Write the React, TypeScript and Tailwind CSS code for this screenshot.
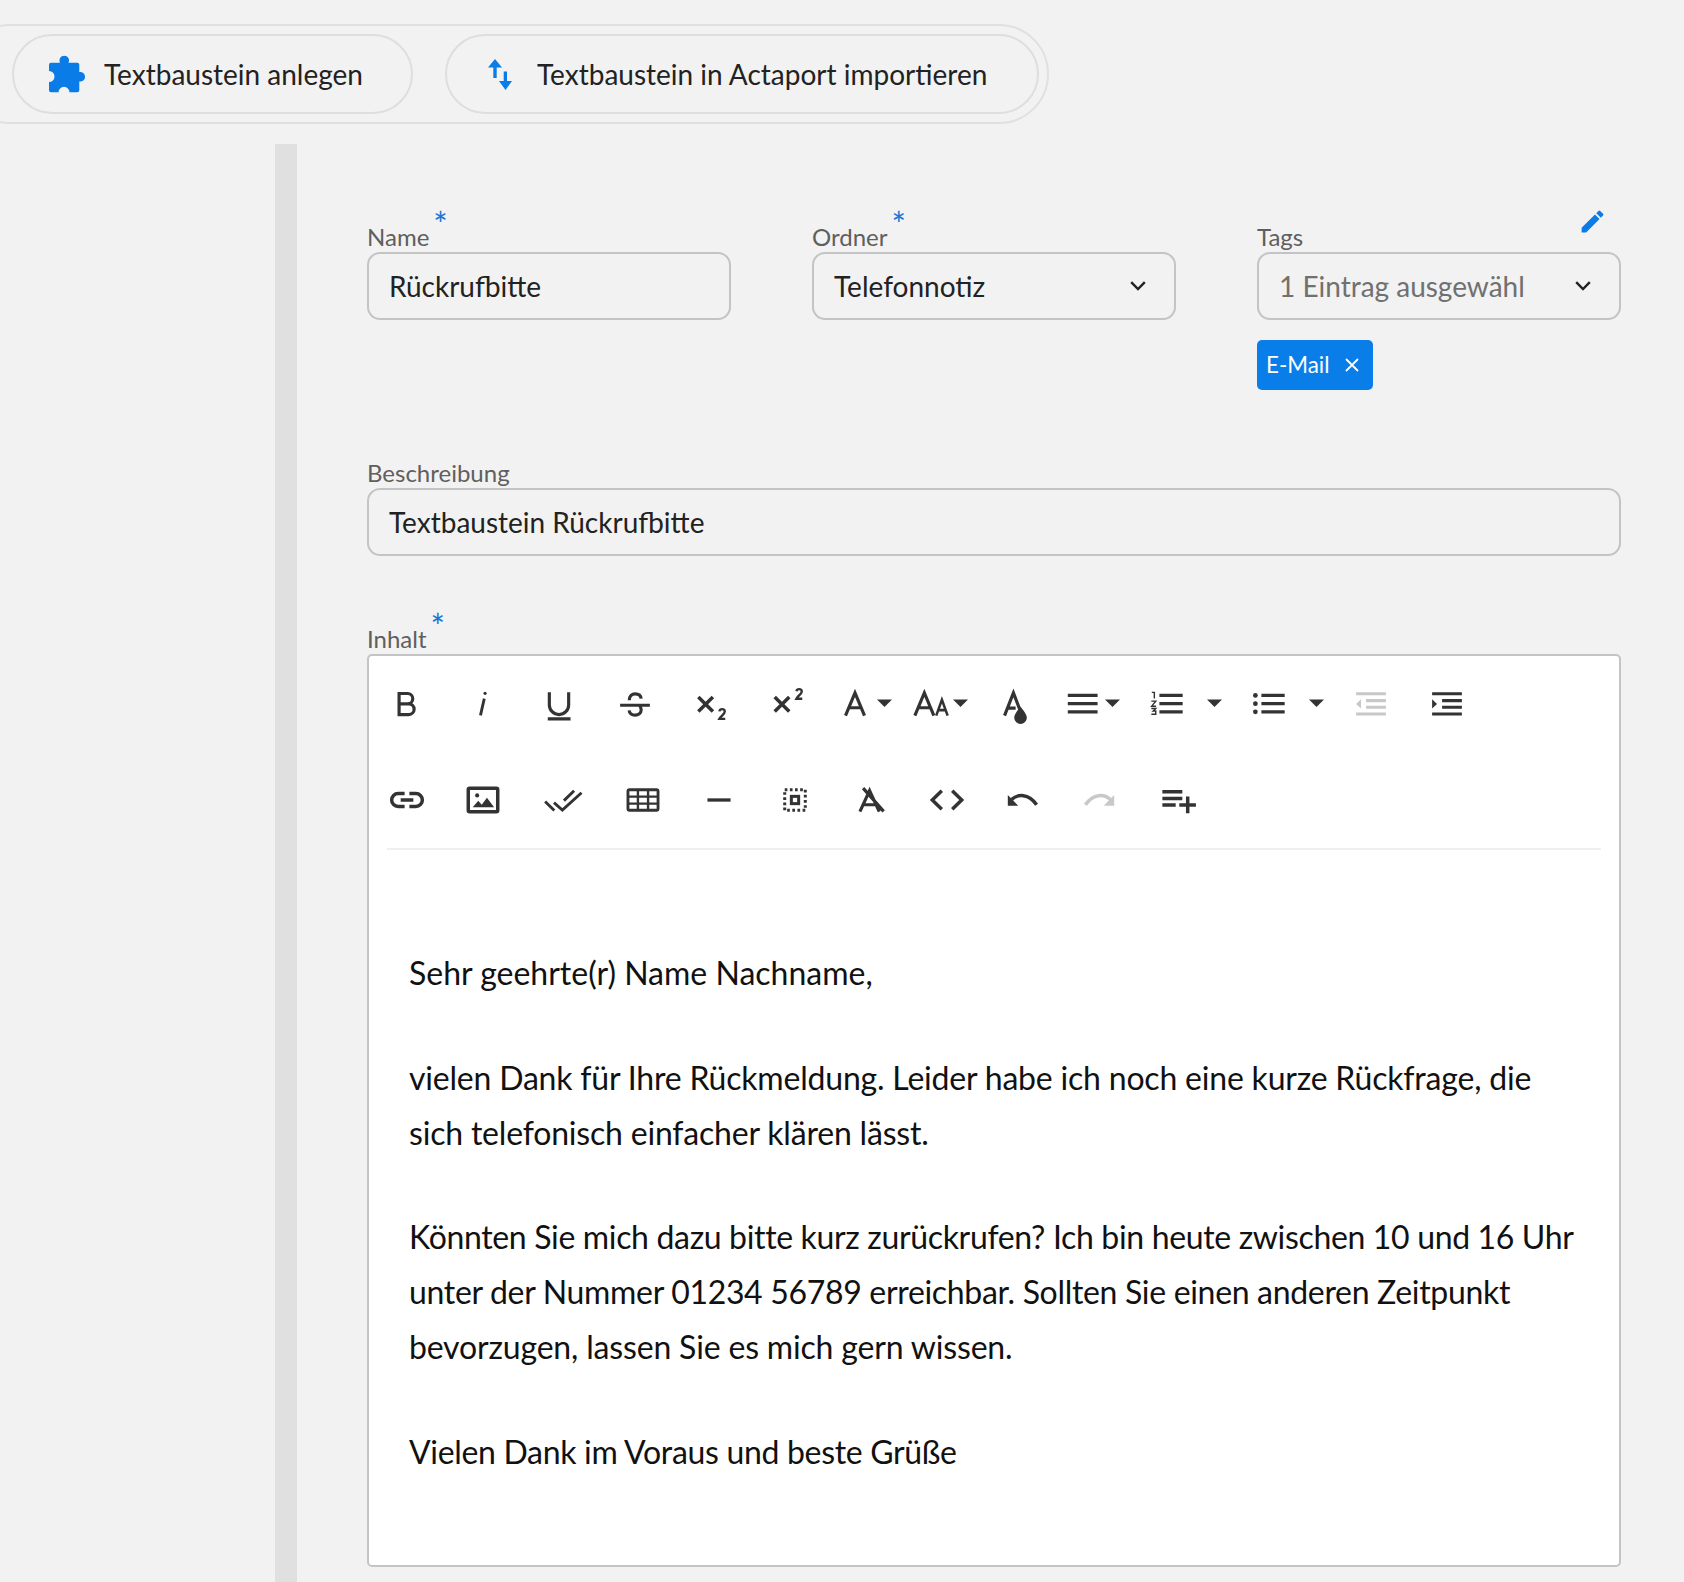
import type { ReactNode } from "react";
import { MdEdit } from "react-icons/md";

const DARK = "#333333";
const OFF = "#c8c8c8";

function Icon({ children, color = DARK }: { children: ReactNode; color?: string }) {
  return (
    <svg
      viewBox="0 0 24 24"
      className="h-[38px] w-[38px] shrink-0 overflow-visible"
      fill="none"
      stroke={color}
      strokeWidth="2"
    >
      {children}
    </svg>
  );
}

function Caret({ className = "" }: { className?: string }) {
  return (
    <svg viewBox="0 0 15 8" className={`h-2 w-[15px] shrink-0 ${className}`}>
      <path d="M0 0.5h15L7.5 8z" fill={DARK} />
    </svg>
  );
}

function Btn({ children, wide, className = "" }: { children: ReactNode; wide?: boolean; className?: string }) {
  return (
    <div className={`flex h-[76px] shrink-0 items-center justify-center ${wide ? "w-[84px]" : "w-[76.1px]"} ${className}`}>
      {children}
    </div>
  );
}

function Chevron() {
  return (
    <svg viewBox="0 0 16 10" className="h-2.5 w-4 shrink-0" fill="none" stroke="#222" strokeWidth="2.4">
      <path d="M1.200 1.200L8 8l6.800-6.800" />
    </svg>
  );
}

function Label({ text, star }: { text: string; star?: boolean }) {
  return (
    <div className="relative flex h-[30px] items-center text-[24px] leading-none text-[#5f5f5f]">
      {text}
      {star && <span className="relative -top-[13px] ml-[4px] text-[34px] leading-none text-[#1976d2]">*</span>}
    </div>
  );
}

const fieldClass =
  "flex h-[68px] items-center rounded-[13px] border-2 border-[#c4c4c4] px-[20px] text-[28px] text-[#222]";

export default function App() {
  return (
    <div className="h-[1582px] w-[1684px] overflow-hidden bg-[#f2f2f2] font-['Lato',sans-serif]">
      {/* Top button group */}
      <div className="pt-[24px]">
        <div className="ml-[-40px] flex h-[100px] w-[1089px] items-center gap-[32px] rounded-[50px] border-2 border-[#e0e0e0] pl-[50px]">
          <div className="flex h-[80px] w-[401px] items-center rounded-[40px] border-2 border-[#dedede] pl-[35px] text-[28px] text-[#222]">
            <svg viewBox="0 0 38 38" className="h-[38px] w-[38px]" fill="#0a7ce8">
              <path d="M2 7.700H11A4.800 4.800 0 1 1 19.500 7.700H28.300a2 2 0 0 1 2 2V17A4.800 4.800 0 1 1 30.300 26.400V35.300a2 2 0 0 1-2 2H20.500A5.500 5.500 0 0 0 9.500 37.300H2a2 2 0 0 1-2-2V27A5.500 5.500 0 0 0 0 16V9.700a2 2 0 0 1 2-2z" />
            </svg>
            <span className="ml-[17px]">Textbaustein anlegen</span>
          </div>
          <div className="flex h-[80px] w-[594px] items-center rounded-[40px] border-2 border-[#dedede] pl-[41px] text-[28px] text-[#222]">
            <svg viewBox="0 0 24 31" className="h-[31px] w-6" fill="#0a7ce8">
              <path d="M7 0l7 8.500H8.700V19H5.300V8.500H0z" />
              <path d="M17.500 31L11 22h4.700V12.500h3.300V22H24z" />
            </svg>
            <span className="ml-[25px]">Textbaustein in Actaport importieren</span>
          </div>
        </div>
      </div>

      <div className="mt-[20px] flex h-[1438px]">
        <div className="ml-[275px] w-[22px] shrink-0 bg-[#e0e0e0]" />
        <div className="ml-[70px] w-[1254px] pt-[78px]">
          {/* First row of fields */}
          <div className="grid grid-cols-3 gap-x-[81px]">
            <div>
              <Label text="Name" star />
              <div className={fieldClass}>Rückrufbitte</div>
            </div>
            <div>
              <Label text="Ordner" star />
              <div className={`${fieldClass} justify-between pr-[28px]`}>
                Telefonnotiz
                <Chevron />
              </div>
            </div>
            <div className="relative">
              <Label text="Tags" />
              <MdEdit className="absolute right-[14px] top-[-15px] h-[29px] w-[29px] text-[#0a7ce8]" />
              <div className={`${fieldClass} justify-between pr-[28px] text-[#707070]`}>
                <span className="w-[246px] overflow-hidden whitespace-nowrap">1 Eintrag ausgewählt</span>
                <Chevron />
              </div>
              <div className="mt-[20px] flex h-[50px] w-[116px] items-center rounded-[5px] bg-[#0a7ee8] pl-[9px] text-[22.4px] text-white">
                E-Mail
                <svg viewBox="0 0 14 14" className="ml-[15px] h-[14px] w-[14px]" fill="none" stroke="#fff" strokeWidth="1.800">
                  <path d="M1 1l12 12M13 1L1 13" />
                </svg>
              </div>
            </div>
          </div>

          {/* Beschreibung */}
          <div className="mt-[68px]">
            <Label text="Beschreibung" />
            <div className={fieldClass}>Textbaustein Rückrufbitte</div>
          </div>

          {/* Inhalt */}
          <div className="mt-[68px]">
            <Label text="Inhalt" star />
            <div className="h-[913px] overflow-hidden rounded-[5px] border-2 border-[#c4c4c4] bg-white">
              <div className="flex pt-[9px]">
                <Btn>
                  <Icon><path d="M7 6h5.400a3.200 3.200 0 0 1 0 6.500H7zM7 12.500h6.100a3.400 3.400 0 0 1 0 6.800H7z" /></Icon>
                </Btn>
                <Btn>
                  <Icon>
                    <path d="M12.800 9.200L10.400 19.800" strokeWidth="1.800" />
                    <circle cx="13.300" cy="5.900" r="1" fill={DARK} stroke="none" />
                  </Icon>
                </Btn>
                <Btn>
                  <Icon><path d="M5.900 5.200v8a6.100 6.100 0 0 0 12.200 0v-8M4.900 22h14.400" /></Icon>
                </Btn>
                <Btn>
                  <Icon>
                    <path d="M2.600 13.400h18.800" />
                    <path d="M8.400 10.300c0-2.700 1.700-4.100 3.700-4.100 2.100 0 3.600 1.200 3.800 3M8.300 16.700c.2 1.800 1.700 3 3.800 3 2 0 3.800-1.200 3.800-3.400 0-1.100-.4-1.900-1-2.900" />
                  </Icon>
                </Btn>
                <Btn>
                  <Icon>
                    <path d="M4 8.200l9.200 9.200M13.200 8.200L4 17.400" strokeWidth="2.200" />
                    <path d="M17.300 17.300c.2-1 .8-1.400 1.700-1.400 1 0 1.700.6 1.700 1.500 0 1.500-2.300 2.600-3.400 4.600h3.700" strokeWidth="1.500" />
                  </Icon>
                </Btn>
                <Btn>
                  <Icon>
                    <path d="M3.600 8.200l9.200 9.200M12.800 8.200L3.600 17.400" strokeWidth="2.200" />
                    <path d="M17.300 4.600c.2-1 .8-1.400 1.700-1.400 1 0 1.700.6 1.700 1.500 0 1.500-2.300 2.600-3.400 4.600h3.700" strokeWidth="1.500" />
                  </Icon>
                </Btn>

                <div className="flex h-[76px] w-[75px] shrink-0 items-center pl-[10px]">
                  <Icon><path d="M6 20L12 5.600 18 20M8.200 15h7.600" /></Icon>
                  <Caret className="ml-[3.500px]" />
                </div>
                <div className="flex h-[76px] w-[76px] shrink-0 items-center pl-[11px]">
                  <Icon>
                    <path d="M1.800 20L7.800 5.600 13.800 20M4 15h7.600" />
                    <path d="M15.300 20l3.600-10 3.600 10M16.500 16.500h4.800" strokeWidth="1.600" />
                  </Icon>
                  <Caret className="ml-[3.500px]" />
                </div>
                <div className="flex h-[76px] w-[76px] shrink-0 items-center justify-center">
                  <Icon>
                    <path d="M5.400 20L11 5.600l4 10.400M7.400 15.200h5" />
                    <path d="M15.500 14.300s4 4.400 4 6.900a4 4 0 0 1-8 0c0-2.500 4-6.900 4-6.900z" fill={DARK} stroke="none" />
                  </Icon>
                </div>
                <div className="flex h-[76px] w-[76px] shrink-0 items-center pl-[11px]">
                  <Icon><path d="M2.400 7.200h18.800M2.400 12.400h18.800M2.400 17.600h18.800" strokeWidth="2.100" /></Icon>
                  <Caret className="ml-[3.500px]" />
                </div>
                <div className="flex h-[76px] w-[102px] shrink-0 items-center pl-[19px]">
                  <Icon>
                    <path d="M7.200 7.200h14.700M7.200 12.400h14.700M7.200 17.600h14.700" strokeWidth="2.100" />
                    <path d="M2.400 5.300h1.600v3.900M2.100 10.800h2.800l-2.600 3.200h2.800M2.100 15.500h2.800l-1.600 1.600h1.600v2H2.100" strokeWidth="0.900" />
                  </Icon>
                  <Caret className="ml-[21.500px]" />
                </div>
                <div className="flex h-[76px] w-[102px] shrink-0 items-center pl-[19px]">
                  <Icon>
                    <path d="M7.200 7.200h14.700M7.200 12.400h14.700M7.200 17.600h14.700" strokeWidth="2.100" />
                    <circle cx="3.400" cy="7.200" r="1.500" fill={DARK} stroke="none" />
                    <circle cx="3.400" cy="12.400" r="1.500" fill={DARK} stroke="none" />
                    <circle cx="3.400" cy="17.600" r="1.500" fill={DARK} stroke="none" />
                  </Icon>
                  <Caret className="ml-[21.500px]" />
                </div>
                <Btn>
                  <Icon color={OFF}>
                    <path d="M2.600 6.100h18.800M8.900 10.500h12.500M8.900 14.700h12.500M2.600 18.900h18.800" strokeWidth="1.900" />
                    <path d="M2.600 12.600L5.700 9.700v5.800z" fill={OFF} stroke="none" />
                  </Icon>
                </Btn>
                <Btn>
                  <Icon>
                    <path d="M2.600 6.100h18.800M8.900 10.500h12.500M8.900 14.700h12.500M2.600 18.900h18.800" strokeWidth="1.900" />
                    <path d="M5.700 12.600L2.600 9.700v5.800z" fill={DARK} stroke="none" />
                  </Icon>
                </Btn>
              </div>

              <div className="mt-[21px] flex">
                <Btn>
                  <Icon>
                    <path d="M10.500 7.900H6.400a4.100 4.100 0 0 0 0 8.200h4.100M13.500 7.900h4.100a4.100 4.100 0 0 1 0 8.200h-4.100M8 12h8" strokeWidth="2.200" />
                  </Icon>
                </Btn>
                <Btn>
                  <Icon>
                    <rect x="2.700" y="4.600" width="18.600" height="14.800" rx="0.800" strokeWidth="2.200" />
                    <circle cx="8.300" cy="9.100" r="1.300" fill={DARK} stroke="none" />
                    <path d="M5.500 16.500L9 12.500l2.200 2.500 3.300-4.500 4.500 6z" fill={DARK} stroke="none" />
                  </Icon>
                </Btn>
                <Btn wide>
                  <Icon>
                    <path d="M.7 13l5.800 5.700M6.300 13.700l5.300 4.600L23.700 7.400M12.600 12.400L19 6.100" strokeWidth="1.800" />
                  </Icon>
                </Btn>
                <Btn>
                  <Icon>
                    <rect x="2.500" y="5.500" width="19" height="13" rx="1" strokeWidth="1.800" />
                    <path d="M2.500 9.900h19M2.500 14.300h19M8.800 5.500v13M15.200 5.500v13" strokeWidth="1.500" />
                  </Icon>
                </Btn>
                <Btn>
                  <Icon><path d="M4.700 12h14.600" strokeWidth="2.100" /></Icon>
                </Btn>
                <Btn>
                  <Icon>
                    <rect x="5.500" y="5.500" width="13" height="13" strokeWidth="1.900" strokeDasharray="1.700 1.550" />
                    <rect x="9.700" y="9.700" width="4.600" height="4.600" strokeWidth="1.900" />
                  </Icon>
                </Btn>
                <Btn className="-ml-px">
                  <Icon>
                    <path d="M5 19.400L11.100 6l6.100 13.400M7.300 15H15M7 4.500l13 14.700" />
                  </Icon>
                </Btn>
                <Btn>
                  <Icon><path d="M8.700 6.100L2.700 12l6 5.900M15.300 6.100l6 5.900-6 5.900" strokeWidth="2.200" /></Icon>
                </Btn>
                <Btn>
                  <Icon>
                    <path d="M2.400 8.900v6.700H9z" fill={DARK} stroke="none" />
                    <path d="M4.900 11.600C8.500 8.300 15.500 7.500 20.600 15" strokeWidth="2.200" />
                  </Icon>
                </Btn>
                <Btn>
                  <Icon color={OFF}>
                    <path d="M21.600 8.900v6.700H15z" fill={OFF} stroke="none" />
                    <path d="M19.100 11.600C15.500 8.300 8.500 7.500 3.400 15" strokeWidth="2.200" />
                  </Icon>
                </Btn>
                <Btn wide>
                  <Icon>
                    <path d="M1.500 6.800h12.600M1.500 11h12.600M1.500 15.100h8.400M12.200 15.100h10.500M17.500 9.800v10.600" strokeWidth="2.200" />
                  </Icon>
                </Btn>
              </div>

              <div className="mx-[18px] mt-[10px] h-[2px] bg-[#efefef]" />

              <div className="whitespace-nowrap px-[40px] pt-[96px] text-[32px] leading-[54.8px] text-[#111]">
                <p className="mb-[50px]">Sehr geehrte(r) Name Nachname,</p>
                <p className="mb-[50px]">
                  <span className="tracking-[-0.2px]">vielen Dank für Ihre Rückmeldung. Leider habe ich noch eine kurze Rückfrage, die</span>
                  <br />
                  <span className="tracking-[-0.19px]">sich telefonisch einfacher klären lässt.</span>
                </p>
                <p className="mb-[50px]">
                  <span className="tracking-[-0.34px]">Könnten Sie mich dazu bitte kurz zurückrufen? Ich bin heute zwischen 10 und 16 Uhr</span>
                  <br />
                  <span className="tracking-[-0.32px]">unter der Nummer 01234 56789 erreichbar. Sollten Sie einen anderen Zeitpunkt</span>
                  <br />
                  <span className="tracking-[-0.17px]">bevorzugen, lassen Sie es mich gern wissen.</span>
                </p>
                <p className="tracking-[-0.32px]">Vielen Dank im Voraus und beste Grüße</p>
              </div>
            </div>
          </div>
        </div>
      </div>
    </div>
  );
}
